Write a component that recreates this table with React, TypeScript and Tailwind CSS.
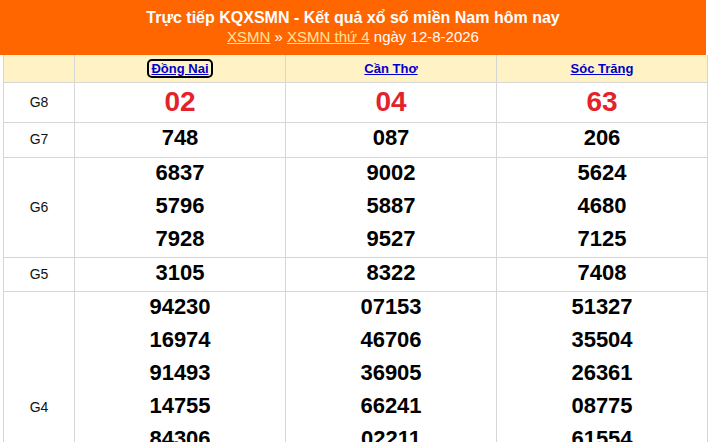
const provinces = ["Đồng Nai", "Cần Thơ", "Sóc Trăng"];

const rows: { label: string; h: string; values: string[][]; big?: boolean }[] = [
  { label: "G8", h: "h-[40px]", values: [["02"], ["04"], ["63"]], big: true },
  { label: "G7", h: "h-[35px]", values: [["748"], ["087"], ["206"]] },
  {
    label: "G6",
    h: "h-[100px]",
    values: [
      ["6837", "5796", "7928"],
      ["9002", "5887", "9527"],
      ["5624", "4680", "7125"],
    ],
  },
  { label: "G5", h: "h-[34px]", values: [["3105"], ["8322"], ["7408"]] },
  {
    label: "G4",
    h: "h-[231px]",
    values: [
      ["94230", "16974", "91493", "14755", "84306", "32077", "05129"],
      ["07153", "46706", "36905", "66241", "02211", "48620", "71398"],
      ["51327", "35504", "26361", "08775", "61554", "19032", "44816"],
    ],
  },
];

export default function App() {
  return (
    <div className="w-[708px] h-[442px] overflow-hidden bg-white font-['Liberation_Sans',Arial,sans-serif]">
      <div className="w-[706px] h-[55px] bg-[#ff6600] text-center text-white pt-[8px]">
        <div className="text-[16px] font-bold leading-[19px]">
          Trực tiếp KQXSMN - Kết quả xổ số miền Nam hôm nay
        </div>
        <div className="text-[15px] leading-[19px]">
          <a className="underline text-[#ffe49c]">XSMN</a> »{" "}
          <a className="underline text-[#ffe49c]">XSMN thứ 4</a> ngày 12-8-2026
        </div>
      </div>
      <table className="ml-[3px] w-[704px] table-fixed border-collapse">
        <colgroup>
          <col className="w-[71px]" />
          <col className="w-[211px]" />
          <col className="w-[211px]" />
          <col className="w-[211px]" />
        </colgroup>
        <thead>
          <tr className="h-[27px] bg-[#fff2c4]">
            <th className="border border-t-0 border-[#d6d6d6]"></th>
            {provinces.map((p, i) => (
              <th key={p} className="border border-t-0 border-[#d6d6d6] text-[13px] font-bold">
                <a
                  className={
                    "underline text-[#0000cc] px-[2px] " +
                    (i === 0 ? "outline-2 outline-black rounded-[3px]" : "")
                  }
                >
                  {p}
                </a>
              </th>
            ))}
          </tr>
        </thead>
        <tbody>
          {rows.map((r) => (
            <tr key={r.label} className={r.h}>
              <td className="border border-[#d6d6d6] text-center text-[14px] text-[#111]">{r.label}</td>
              {r.values.map((col, i) => (
                <td key={i} className="border border-[#d6d6d6] text-center align-middle">
                  {col.map((v) => (
                    <div
                      key={v}
                      className={
                        r.big
                          ? "text-[28px] font-bold leading-[38px] text-[#e3222b]"
                          : "text-[22px] font-bold leading-[29px] pb-[4px] text-black"
                      }
                    >
                      {v}
                    </div>
                  ))}
                </td>
              ))}
            </tr>
          ))}
        </tbody>
      </table>
    </div>
  );
}
